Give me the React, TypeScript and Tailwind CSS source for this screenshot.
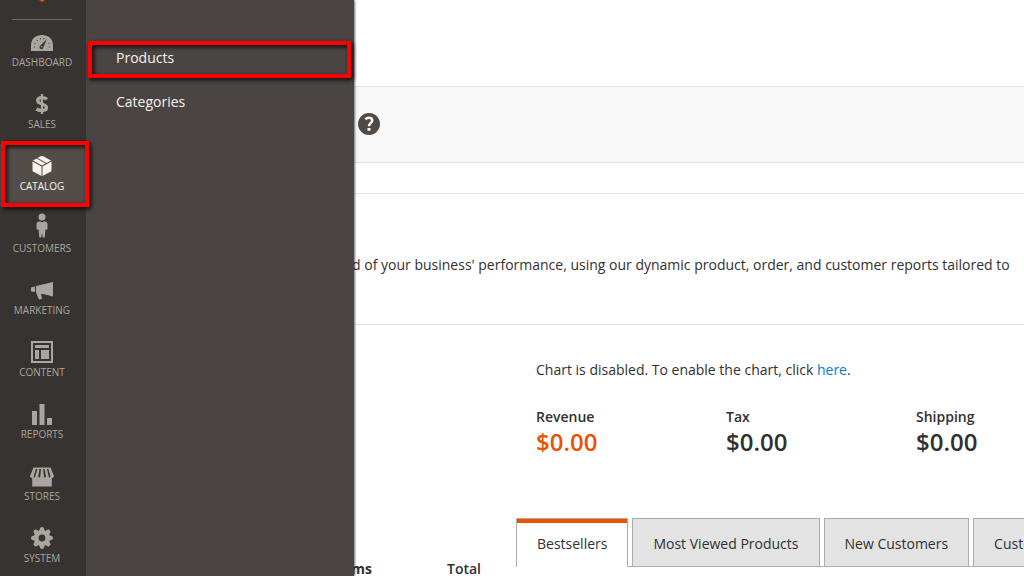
import type { ReactNode } from "react";

type NavItem = { label: string; icon: ReactNode; active?: boolean };

const Dashboard = () => (
  <svg viewBox="0 0 22 18" className="mt-[2px] h-[18px] w-[22px]" fill="currentColor">
    <path d="M0 17V11.500C0 5 4.700 1 11 1S22 5 22 11.500V17Z" />
    <g fill="#373330">
      <path d="M15.800 5L9.600 11.600A1.900 1.900 0 1 0 12.300 13.600Z" />
      <circle cx="3.500" cy="13" r=".6" />
      <circle cx="4" cy="9.500" r=".6" />
      <circle cx="6.300" cy="6.500" r=".6" />
      <circle cx="9.500" cy="4.700" r=".6" />
      <circle cx="13" cy="4.700" r=".6" />
      <circle cx="18" cy="9.500" r=".6" />
      <circle cx="18.500" cy="13" r=".6" />
    </g>
    <circle cx="10.900" cy="12.800" r=".8" />
  </svg>
);

const Dollar = () => (
  <svg viewBox="0 0 14 22" className="h-[22px] w-[14px]" fill="none" stroke="currentColor">
    <path d="M7 1V21" strokeWidth="2.200" />
    <path d="M12 6.300C10.600 5.200 9 4.600 7 4.600C4.200 4.600 2.700 5.800 2.700 7.600C2.700 9.700 4.700 10.300 7 11C9.700 11.800 11.500 12.500 11.500 14.600C11.500 16.600 9.800 17.600 7 17.600C4.800 17.600 3 17 1.400 16" strokeWidth="3.300" />
  </svg>
);

const Box = () => (
  <svg viewBox="0 0 20 22" className="h-[22px] w-5" fill="currentColor">
    <path d="M.5 6.400L9.500 11.400V21L1.200 16.400Q.5 16 .5 15.200Z" />
    <path d="M19.500 6.400L10.500 11.400V21L18.800 16.400Q19.500 16 19.500 15.200Z" />
    <path d="M1 5.500L4.600 3.500L13.600 8.600L10 10.500Z" />
    <path d="M5.600 3L9.200 1.100Q10 .7 10.800 1.100L19 5.500L14.600 8Z" />
  </svg>
);

const Person = () => (
  <svg viewBox="0 0 12 26" className="-mt-1 h-[26px] w-3" fill="currentColor">
    <circle cx="6" cy="4" r="3.500" />
    <path d="M3 8.500H4.500L6 9.500L7.500 8.500H9Q11.500 8.800 11.500 11V16.500H9.500L8.700 24.500H6.700L6 19.500L5.300 24.500H3.300L2.500 16.500H.5V11Q.5 8.800 3 8.500Z" />
  </svg>
);

const Megaphone = () => (
  <svg viewBox="0 0 22 20" className="mt-[2px] h-5 w-[22px]" fill="currentColor">
    <path d="M0 6.500L4 5.500V11L0 10.500Z" />
    <path d="M5 5L22 1V15.500L12 13H10L11 18L8 18.500L5 11.500Z" />
  </svg>
);

const Layout = () => (
  <svg viewBox="0 0 22 22" className="size-[22px]" fill="currentColor">
    <path d="M0 0H22V22H0ZM2 2V20H20V2Z" fillRule="evenodd" />
    <path d="M4 4H18V7H4ZM4 9H8V18H4ZM10 9H18V18H10Z" />
  </svg>
);

const Bars = () => (
  <svg viewBox="0 0 20 22" className="h-[22px] w-5" fill="currentColor">
    <path d="M0 8H5V22H0ZM7.500 1H12.500V22H7.500ZM15 15H20V22H15Z" />
  </svg>
);

const Store = () => (
  <svg viewBox="0 0 24 20" className="mt-[2px] h-5 w-6" fill="currentColor">
    <path d="M3.500 .5H20.500L24 9C24 10.800 21.700 11.500 20.500 10.700H21.800V19.500H2.200V10.700H3.500C2.300 11.500 0 10.800 0 9Z" />
    <path d="M5.800 2H7.400L5 10.200Q3.900 11.100 3.700 9.500ZM9.500 2H11L10.200 10.200Q9 11.100 8.200 9.500ZM13.200 2H14.600L15.900 9.500Q15.200 11.100 14 10.200ZM17 2H18.400L20.400 9.500Q20 11.100 18.900 10.200Z" fill="#373330" />
  </svg>
);

const Gear = () => (
  <svg viewBox="-11 -11 22 22" className="size-[22px]">
    <g fill="currentColor" stroke="currentColor" strokeWidth="1" strokeLinejoin="round">
      <circle r="7.300" />
      <path id="tooth" d="M-2.400-7L-1.200-10.300H1.200L2.400-7V7L1.200 10.300H-1.200L-2.400 7Z" />
      <use href="#tooth" transform="rotate(45)" />
      <use href="#tooth" transform="rotate(90)" />
      <use href="#tooth" transform="rotate(135)" />
    </g>
    <circle r="3.400" fill="#373330" />
  </svg>
);

const navItems: NavItem[] = [
  { label: "Dashboard", icon: <Dashboard /> },
  { label: "Sales", icon: <Dollar /> },
  { label: "Catalog", icon: <Box />, active: true },
  { label: "Customers", icon: <Person /> },
  { label: "Marketing", icon: <Megaphone /> },
  { label: "Content", icon: <Layout /> },
  { label: "Reports", icon: <Bars /> },
  { label: "Stores", icon: <Store /> },
  { label: "System", icon: <Gear /> },
];

const totals = [
  { label: "Revenue", color: "text-[#eb5202]" },
  { label: "Tax", color: "text-[#303030]" },
  { label: "Shipping", color: "text-[#303030]" },
];

const tabs = ["Bestsellers", "Most Viewed Products", "New Customers", "Customers"];

function Sidebar() {
  return (
    <nav aria-label="Main" className="relative z-20 w-[86px] shrink-0 bg-[#373330]">
      <div className="mx-3 mr-[14px] flex h-5 justify-center border-b border-[#736963]">
        <svg viewBox="0 0 6 2" className="h-[2px] w-[6px]" fill="#eb5202">
          <path d="M0 0H6L3 2Z" />
        </svg>
      </div>
      <ul>
        {navItems.map((item) => (
          <li key={item.label} className="relative">
            <a
              href="#"
              className={`flex h-[62px] flex-col items-center pt-[9px] pr-[2px] text-[10px] leading-[14px] font-medium uppercase ${
                item.active ? "bg-[#524d49] text-[#f7f3eb]" : "text-[#aaa69f]"
              }`}
            >
              <span className="flex h-[26px] items-center">{item.icon}</span>
              {item.label}
            </a>
            {item.active && (
              <span className="pointer-events-none absolute -top-[3px] -right-[3px] -bottom-px left-px border-4 border-[#ff0000] drop-shadow-[2px_2px_2px_rgba(0,0,0,0.9)]" />
            )}
          </li>
        ))}
      </ul>
    </nav>
  );
}

function CatalogMenu() {
  return (
    <ul className="absolute inset-y-0 left-[86px] z-10 w-[268px] bg-[#4a4542] pt-9 text-sm font-medium text-[#f7f3eb] shadow-[0_0_3px_#000]">
      <li className="relative">
        <a href="#" className="flex h-11 items-center pl-[30px]">Products</a>
        <span className="pointer-events-none absolute top-[5px] right-[3px] bottom-[2px] left-[2px] border-4 border-[#ff0000] drop-shadow-[2px_2px_2px_rgba(0,0,0,0.9)]" />
      </li>
      <li>
        <a href="#" className="flex h-11 items-center pl-[30px]">Categories</a>
      </li>
    </ul>
  );
}

export default function App() {
  return (
    <div className="relative flex h-screen overflow-hidden bg-white font-['Open_Sans','Noto_Sans',sans-serif] text-sm text-[#303030]">
      <Sidebar />
      <CatalogMenu />
      <main className="min-w-0 flex-1">
        <header className="h-[86px]" />
        <div className="flex h-[77px] items-center border-y border-[#e3e3e3] bg-[#f8f8f8] pb-px pl-[272px]">
          <button type="button" aria-label="Help" className="flex size-[22px] items-center justify-center rounded-full bg-[#514943] text-[#f8f8f8]">
            <svg viewBox="0 0 22 22" className="size-[22px]" fill="none" stroke="currentColor" strokeWidth="2.600">
              <path d="M7.300 6.200C8.300 5.300 9.500 4.800 11 4.800C13 4.800 14.200 5.800 14.200 7.400C14.200 9.900 11 9.900 11 13.200" />
              <path d="M9.500 16.400H12.500" strokeWidth="2.800" />
            </svg>
          </button>
        </div>
        <div className="h-[30px]" />
        <section className="h-[132px] border-y border-[#e3e3e3] pt-[61px] pl-[30px] leading-5">
          <p>
            Gain new insights and take command of your business' performance, using our dynamic product, order, and customer reports tailored to your customer data.
          </p>
        </section>
        <div className="flex">
          <div className="w-[430px] shrink-0 pt-[234px] pr-[35px] pl-8">
            <table className="w-full leading-5">
              <thead>
                <tr>
                  <th className="text-left font-bold">Customer</th>
                  <th className="text-right font-bold">Items</th>
                  <th className="w-[109px] text-right font-semibold">Total</th>
                </tr>
              </thead>
            </table>
          </div>
          <div className="min-w-0 flex-1">
            <p className="pt-[35px] pl-5 leading-5">
              Chart is disabled. To enable the chart, click <a href="#" className="text-[#007bdb]">here</a>.
            </p>
            <dl className="flex pt-[27px] pl-5">
              {totals.map((t) => (
                <div key={t.label} className="w-[190px] shrink-0">
                  <dt className="leading-5 font-semibold">{t.label}</dt>
                  <dd className={`text-2xl leading-[30px] font-semibold ${t.color}`}>$0.00</dd>
                </div>
              ))}
            </dl>
            <div role="tablist" className="mt-[61px] flex gap-1 border-b border-[#adadad]">
              {tabs.map((tab, i) => (
                <button
                  key={tab}
                  type="button"
                  role="tab"
                  aria-selected={i === 0}
                  className={`relative h-12 shrink-0 border-x border-t border-[#adadad] px-5 pt-[2px] whitespace-nowrap ${
                    i === 0 ? "-mb-px h-[49px] bg-white font-medium" : "bg-[#e3e3e3]"
                  }`}
                >
                  {i === 0 && <span className="absolute inset-x-0 top-0 h-1 bg-[#eb5202]" />}
                  {tab}
                </button>
              ))}
            </div>
          </div>
        </div>
      </main>
    </div>
  );
}
